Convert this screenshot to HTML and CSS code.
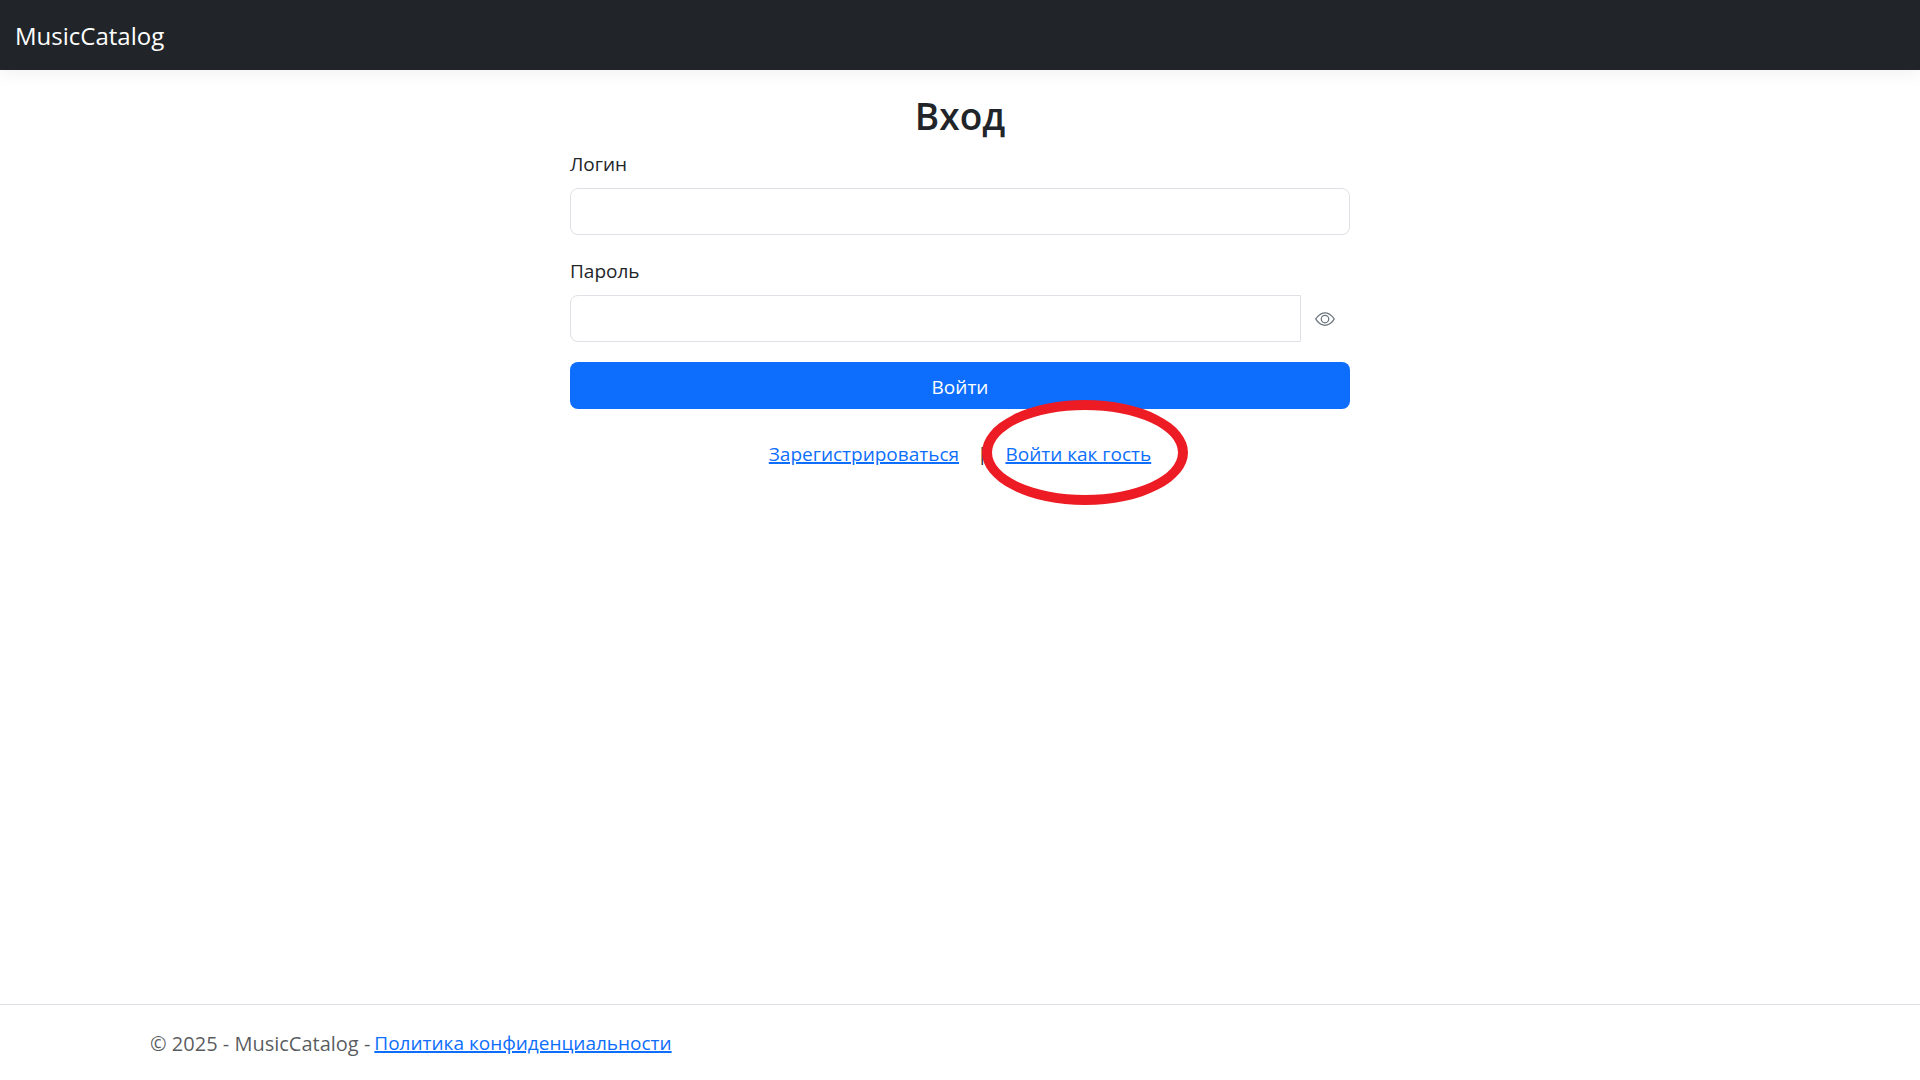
FILE: index.html
```html
<!DOCTYPE html>
<html lang="ru">
<head>
  <meta charset="utf-8">
  <meta name="viewport" content="width=device-width, initial-scale=1">
  <title>Вход - MusicCatalog</title>
  <link rel="stylesheet" href="styles.css">
</head>
<body>
  <header class="navbar">
    <a class="brand" href="#">MusicCatalog</a>
  </header>
  <main class="content">
    <h1 class="title">Вход</h1>
    <form class="login">
      <div class="field">
        <label class="label" for="login">Логин</label>
        <input class="input" id="login" type="text">
      </div>
      <div class="field">
        <label class="label" for="password">Пароль</label>
        <div class="input-group">
          <input class="input input-joined" id="password" type="password">
          <button class="toggle" type="button" aria-label="Показать пароль">
            <svg class="eye" viewBox="0 0 16 16" fill="currentColor" aria-hidden="true">
              <path d="M16 8s-3-5.500-8-5.500S0 8 0 8s3 5.500 8 5.500S16 8 16 8M1.173 8a13 13 0 0 1 1.660-2.043C4.120 4.668 5.880 3.500 8 3.500s3.879 1.168 5.168 2.457A13 13 0 0 1 14.828 8q-.086.130-.195.288c-.335.480-.830 1.120-1.465 1.755C11.879 11.332 10.119 12.500 8 12.500s-3.879-1.168-5.168-2.457A13 13 0 0 1 1.172 8z"/>
              <path d="M8 5.500a2.500 2.500 0 1 0 0 5 2.500 2.500 0 0 0 0-5M4.500 8a3.500 3.500 0 1 1 7 0 3.500 3.500 0 0 1-7 0"/>
            </svg>
          </button>
        </div>
      </div>
      <button class="submit" type="submit">Войти</button>
    </form>
    <nav class="links">
      <a class="link" href="#">Зарегистрироваться</a>
      <span>|</span>
      <span class="guest"><a class="link" href="#">Войти как гость</a></span>
    </nav>
  </main>
  <footer class="footer">
    <div class="footer-inner">
      <span class="copyright">© 2025 - MusicCatalog -</span>
      <a class="link" href="#">Политика конфиденциальности</a>
    </div>
  </footer>
</body>
</html>
```
FILE: styles.css
```css
*,
*::after {
  box-sizing: border-box;
}

body {
  display: flex;
  flex-direction: column;
  min-height: 100vh;
  margin: 0;
  background: #fff;
  color: #212529;
  font-family: "Segoe UI", "Open Sans", "Noto Sans", sans-serif;
  font-size: 19px;
  line-height: 30px;
}

.navbar {
  display: flex;
  align-items: center;
  padding: 17px 15px 15px;
  background: #212529;
  box-shadow: 0 5px 15px rgba(0, 0, 0, 0.05);
}

.brand {
  color: #fff;
  font-size: 24px;
  line-height: 38px;
  text-decoration: none;
}

.content {
  flex: 1;
  width: 100%;
  max-width: 780px;
  margin: 0 auto;
  padding-top: 20px;
}

.title {
  margin: 0 0 6px;
  font-size: 37px;
  font-weight: 600;
  line-height: 52px;
  text-align: center;
}

.login {
  display: flex;
  flex-direction: column;
  gap: 20px;
}

.label {
  display: block;
  padding-top: 1px;
  margin-bottom: 9px;
}

.input {
  display: block;
  width: 100%;
  height: 47px;
  padding: 8px 15px;
  border: 1px solid #dee2e6;
  border-radius: 8px;
  background: #fff;
  color: inherit;
  font: inherit;
}

.input-group {
  display: flex;
}

.input-joined {
  flex: 1;
  min-width: 0;
  border-radius: 8px 0 0 8px;
}

.toggle {
  display: flex;
  align-items: center;
  padding: 0 15px 0 14px;
  border: 0;
  background: none;
  color: #6c757d;
}

.eye {
  width: 20px;
  height: 20px;
}

.submit {
  height: 47px;
  padding: 2px 15px 0;
  border: 0;
  border-radius: 8px;
  background: #0d6efd;
  color: #fff;
  font: inherit;
}

.link {
  color: #0d6efd;
  text-decoration: underline;
  text-decoration-thickness: 2px;
}

.links {
  display: flex;
  justify-content: center;
  gap: 18px;
  margin-top: 30px;
}

.guest {
  position: relative;
}

/* Highlight ring drawn over the guest link */
.guest::after {
  content: "";
  position: absolute;
  top: -39px;
  left: -23px;
  width: 206px;
  height: 105px;
  border: 10px solid #ed1c24;
  border-radius: 50%;
  pointer-events: none;
}

.footer {
  padding-top: 2px;
  border-top: 1px solid #dee2e6;
  color: rgba(33, 37, 41, 0.75);
  line-height: 73px;
}

.footer-inner {
  display: flex;
  align-items: center;
  gap: 4px;
  max-width: 1650px;
  margin: 0 auto;
  padding: 0 15px;
}

.copyright {
  font-size: 20px;
}
```
